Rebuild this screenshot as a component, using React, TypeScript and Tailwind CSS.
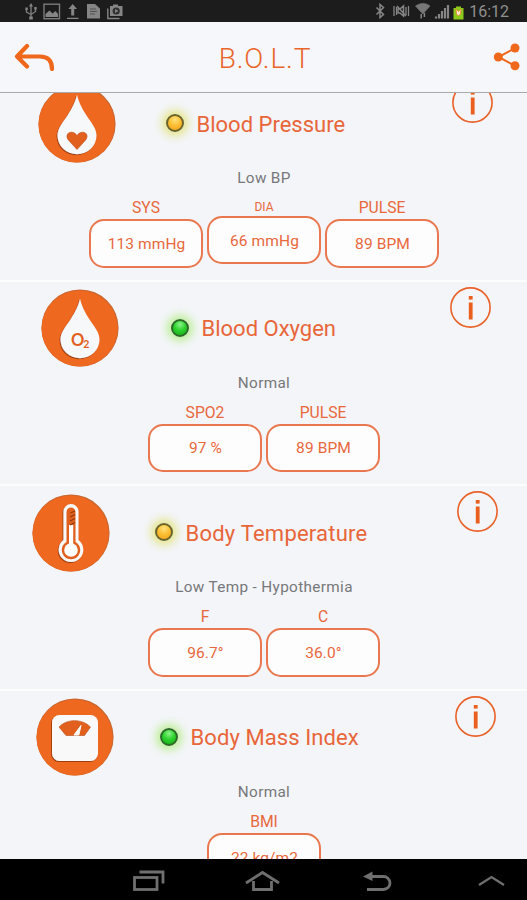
import type { ReactNode } from 'react';

interface Reading {
    label: string;
    value: string;
    small?: boolean;
}

interface Measure {
    name: string;
    titleClass: string;
    status: string;
    level: 'normal' | 'warning';
    icon: ReactNode;
    iconClass: string;
    ledClass: string;
    infoClass: string;
    readings: Reading[];
}

const Disc = ({ children }: { children: ReactNode }) => (
    <svg viewBox="0 0 78 78" className="size-[78px] overflow-visible">
        <defs>
            <filter id="inset" x="-20%" y="-20%" width="140%" height="140%">
                <feDropShadow dx="-0.8" dy="0.9" stdDeviation="0.7" floodColor="#7a2c05" floodOpacity="0.75" />
            </filter>
        </defs>
        <circle cx="39" cy="39" r="38.6" fill="#c9662f" />
        <circle cx="38.6" cy="39.5" r="38" fill="#ef6820" />
        {children}
    </svg>
);

const DROP = 'M39 9.500C40.600 17 43.500 22.500 48.500 30.500C53.500 38 58.500 43.500 58.500 50.500A19.500 18.800 0 0 1 19.500 50.500C19.500 43.500 24.500 38 29.500 30.500C34.500 22.500 37.400 17 39 9.500Z';

const PressureIcon = () => (
    <Disc>
        <path d={DROP} fill="#f7f8f9" filter="url(#inset)" />
        <path d="M39 64.500L30.600 55.300C27.600 51.800 28.900 47.300 33.200 47.200C36 47.200 38 48.700 39 50.700C40 48.700 42 47.200 44.800 47.200C49.100 47.300 50.400 51.800 47.400 55.300Z" fill="#e2601d" stroke="#b94d16" strokeWidth="0.6" />
    </Disc>
);

const OxygenIcon = () => (
    <Disc>
        <path d={DROP} fill="#f7f8f9" filter="url(#inset)" />
        <text x="30" y="57" className="font-[Lato] text-[16.500px] font-bold" fill="#e2601d">O</text>
        <text x="42.300" y="58.800" className="font-[Lato] text-[10.500px] font-bold" fill="#e2601d">2</text>
    </Disc>
);

const TemperatureIcon = () => (
    <Disc>
        <g filter="url(#inset)">
            <path d="M31.500 46V17.500A7.500 7.500 0 0 1 46.500 17.500V46A12.300 12.300 0 1 1 31.500 46Z" fill="#f9f9f9" />
        </g>
        <path d="M34.500 48V18A4.500 4.500 0 0 1 43.500 18V48A9.200 9.200 0 1 1 34.500 48Z" fill="#e2601d" />
        <circle cx="39" cy="56" r="6.800" fill="#fff" />
        <rect x="37" y="31" width="4.200" height="22" fill="#fff" />
        <path d="M38.500 19L43 17M38 23L43 20.500M38 27L43 24.500M38 31L43 28.500" stroke="#8f3b10" strokeWidth="1.100" />
    </Disc>
);

const WeightIcon = () => (
    <Disc>
        <rect x="16" y="17" width="46" height="46" rx="7.500" fill="#f9f9f9" filter="url(#inset)" />
        <path d="M23 29C31 20.500 46 20.500 54.500 29L48.500 37.500H30Z" fill="#e2601d" stroke="#b94d16" strokeWidth="0.600" />
        <path d="M38 37L45 27.500L42.800 37Z" fill="#fff" stroke="#fff" />
    </Disc>
);

const measures: Measure[] = [
    {
        name: 'Blood Pressure',
        titleClass: 'tracking-normal',
        status: 'Low BP',
        level: 'warning',
        icon: <PressureIcon />,
        iconClass: 'ml-[37.500px]',
        ledClass: 'ml-[50.500px]',
        infoClass: 'mr-[34px]',
        readings: [
            { label: 'SYS', value: '113 mmHg' },
            { label: 'DIA', value: '66 mmHg', small: true },
            { label: 'PULSE', value: '89 BPM' },
        ],
    },
    {
        name: 'Blood Oxygen',
        titleClass: 'tracking-normal',
        status: 'Normal',
        level: 'normal',
        icon: <OxygenIcon />,
        iconClass: 'ml-[40.500px]',
        ledClass: 'ml-[52.500px]',
        infoClass: 'mr-[36.500px]',
        readings: [
            { label: 'SPO2', value: '97 %' },
            { label: 'PULSE', value: '89 BPM' },
        ],
    },
    {
        name: 'Body Temperature',
        titleClass: 'tracking-[0.220px]',
        status: 'Low Temp - Hypothermia',
        level: 'warning',
        icon: <TemperatureIcon />,
        iconClass: 'ml-[32px]',
        ledClass: 'ml-[45px]',
        infoClass: 'mr-[29px]',
        readings: [
            { label: 'F', value: '96.7°' },
            { label: 'C', value: '36.0°' },
        ],
    },
    {
        name: 'Body Mass Index',
        titleClass: 'tracking-[0.080px]',
        status: 'Normal',
        level: 'normal',
        icon: <WeightIcon />,
        iconClass: 'ml-[35.500px]',
        ledClass: 'ml-[46.500px]',
        infoClass: 'mr-[31.500px]',
        readings: [{ label: 'BMI', value: '22 kg/m2' }],
    },
];

const Led = ({ level }: { level: Measure['level'] }) => (
    <span
        className={`block size-[18px] rounded-full border-2 ${
            level === 'normal'
                ? 'border-[#2c6b27] bg-[radial-gradient(circle_at_50%_25%,#8df28a,#2fd32f_45%,#12a814)] shadow-[0_0_8px_4px_#bdee96]'
                : 'border-[#6b6428] bg-[radial-gradient(circle_at_50%_25%,#ffe27a,#fbbd31_50%,#ee9f1c)] shadow-[0_0_8px_4px_#e5e58c]'
        }`}
    />
);

const InfoButton = () => (
    <svg viewBox="0 0 41 41" className="size-[41px]">
        <circle cx="20.500" cy="20.500" r="19.600" fill="none" stroke="#e9622a" strokeWidth="1.600" />
        <rect x="18.800" y="9" width="3.800" height="3.600" fill="#ea5f1e" />
        <rect x="18.800" y="15.500" width="3.800" height="17" fill="#ea5f1e" />
    </svg>
);

const ReadingBox = ({ label, value, small }: Reading) => (
    <div className="w-[114px] text-center text-[#e8683c]">
        <p className={small ? 'h-[16.500px] text-[12px] leading-[17px]' : 'h-5 text-[15.700px] leading-[17px]'}>{label}</p>
        <div
            className={`flex h-[48.500px] items-center justify-center rounded-[15px] border-2 border-[#e9774f] bg-[#fdfdfe] pl-px text-[15.500px] tracking-[0.1px] ${
                small ? 'pt-[4px]' : 'pt-[2px]'
            }`}
        >
            {value}
        </div>
    </div>
);

const MeasureCard = ({ measure }: { measure: Measure }) => (
    <section className="h-[204.670px] shrink-0 border-b-2 border-[#fdfdfd]">
        <div className="flex h-[90px] items-start">
            <div className={`mt-[7.500px] ${measure.iconClass}`}>{measure.icon}</div>
            <div className={`mt-[31px] flex h-[30px] items-center gap-[12.500px] ${measure.ledClass}`}>
                <Led level={measure.level} />
                <h2 className={`pt-[2px] text-[22px] whitespace-nowrap text-[#e8663a] ${measure.titleClass}`}>{measure.name}</h2>
            </div>
            <div className={`mt-[5px] ml-auto ${measure.infoClass}`}>
                <InfoButton />
            </div>
        </div>
        <p className="h-8 pl-px text-center text-[15.300px] leading-[22px] tracking-[0.350px] text-[#77787a]">{measure.status}</p>
        <div className="flex items-start justify-center gap-1 pl-px">
            {measure.readings.map((r) => (
                <ReadingBox key={r.label} {...r} />
            ))}
        </div>
    </section>
);

const StatusBar = () => (
    <div className="flex h-[22px] shrink-0 items-center justify-between bg-[#1c1c1c] pr-[18px] pl-6">
        <svg viewBox="0 0 104 22" className="h-[22px] w-[104px]" fill="#858585">
            <g fill="none" stroke="#7c7c7c" strokeWidth="1.400">
                <path d="M7 6V18M2.500 9V12L7 14.500L11.500 11.500V8" />
                <rect x="20" y="4.200" width="15.500" height="14.500" />
            </g>
            <path d="M7 3L9 6.500H5ZM5.200 16.500H8.800V19.500H5.200ZM1.400 7.500H3.800V10H1.400ZM10.300 7H12.700V9.500H10.300Z" />
            <path d="M21.500 17V14L25.500 10.500L28.500 13.500L31.500 11L34 14V17Z" />
            <path d="M48.700 4L53 9H50.200V15.500H47.200V9H44.400ZM43 17.800H54.500V19H43Z" />
            <path d="M63 4H71L76 8.500V18.500H63Z" />
            <path d="M66 9H72M66 11.500H73M66 14H71" stroke="#444" strokeWidth="0.800" />
            <path d="M86 6H89V4.500H94V6H98.500V16H86Z" />
            <path d="M83.800 8.500V18.500H95.500" fill="none" stroke="#858585" strokeWidth="1.400" />
            <circle cx="92.200" cy="11" r="3.600" fill="#303030" />
            <path d="M91 9L94.500 11L91 13Z" />
        </svg>
        <div className="flex items-center gap-[5px]">
            <svg viewBox="0 0 92 22" className="h-[22px] w-[92px]" fill="none" stroke="#858585">
                <path d="M4.500 7.500L11.500 14.500L8 17.500V4.500L11.500 7.500L4.500 14.500" strokeWidth="1.500" />
                <path d="M22 6V16M24.500 7V15M36.500 6V16M34 7V15" strokeWidth="1.300" />
                <path d="M26 9H28L31.500 6V16L28 13H26ZM25 6L34 16" strokeWidth="1.500" />
                <path d="M43.500 6C48 2.500 54 2.500 58 6L50.800 14Z" fill="#777" strokeWidth="0.500" />
                <path d="M49.200 14V18.500M52.400 13V17" strokeWidth="1.500" />
                <path d="M64 18.500V16.500M67 18.500V14M70 18.500V11M73 18.500V8M76 18.500V5" strokeWidth="2.200" />
                <path d="M81.500 8H84V6.500H89V8H91.500V19.500H81.500Z" fill="#8bc91b" stroke="none" />
                <path d="M84 9L86.500 11.500L89 9L88.500 14L86.500 16L84.500 14Z" fill="#ffe9c8" stroke="#e77e2f" strokeWidth="0.800" />
            </svg>
            <span className="pt-px text-[16px] leading-[22px] text-[#909090]">16:12</span>
        </div>
    </div>
);

const NavBar = () => (
    <nav className="flex h-[41px] shrink-0 items-start bg-black pt-[9px] pl-[132px]">
        <svg viewBox="0 0 380 26" className="h-[26px] w-[380px]" fill="none" stroke="#6f6f6f" strokeWidth="2.800">
            <rect x="2.500" y="9.500" width="22.500" height="12" />
            <path d="M7.500 4H31V15.500" />
            <path d="M114 15L130.500 4.500L147 15M121.500 13V21.500H139.500V13" />
            <path d="M238 8.500H251.500A6 6 0 0 1 251.500 21.500H235" />
            <path d="M231 8.500L240.500 3.500V13Z" fill="#6f6f6f" stroke="none" />
            <path d="M347 17L359.500 9L372 17" strokeWidth="2.300" />
        </svg>
    </nav>
);

const App = () => (
    <div className="flex h-[900px] w-[527px] flex-col overflow-hidden bg-[#f3f5f8] font-[Roboto,sans-serif]">
        <StatusBar />
        <header className="grid h-[71px] shrink-0 grid-cols-3 items-center border-b border-[#aaaaae] bg-[#f5f7fa]">
            <svg viewBox="0 0 42 28" className="ml-[14px] h-7 w-[42px]" fill="none" stroke="#ef681c" strokeWidth="4.200" strokeLinecap="round" strokeLinejoin="round">
                <path d="M13 3L3 13.500L13 23.500M3.500 13.500H26C34 13.500 38 18 38 26" />
            </svg>
            <h1 className="pt-[3px] pl-[3px] text-center text-[28px] leading-9 font-light tracking-[0.900px] text-[#ea6529]">B.O.L.T</h1>
            <svg viewBox="0 0 28 28" className="mr-[7.500px] size-7 justify-self-end" fill="#ef681c">
                <path d="M23.500 5L6.500 14L23.500 23" fill="none" stroke="#ef681c" strokeWidth="2" />
                <circle cx="6.300" cy="14" r="4.500" />
                <circle cx="23" cy="5" r="4.500" />
                <circle cx="23" cy="22.800" r="4.500" />
            </svg>
        </header>
        <main className="flex flex-1 flex-col overflow-hidden">
            <div className="-mt-4 flex flex-col">
                {measures.map((m) => (
                    <MeasureCard key={m.name} measure={m} />
                ))}
            </div>
        </main>
        <NavBar />
    </div>
);

export default App;
